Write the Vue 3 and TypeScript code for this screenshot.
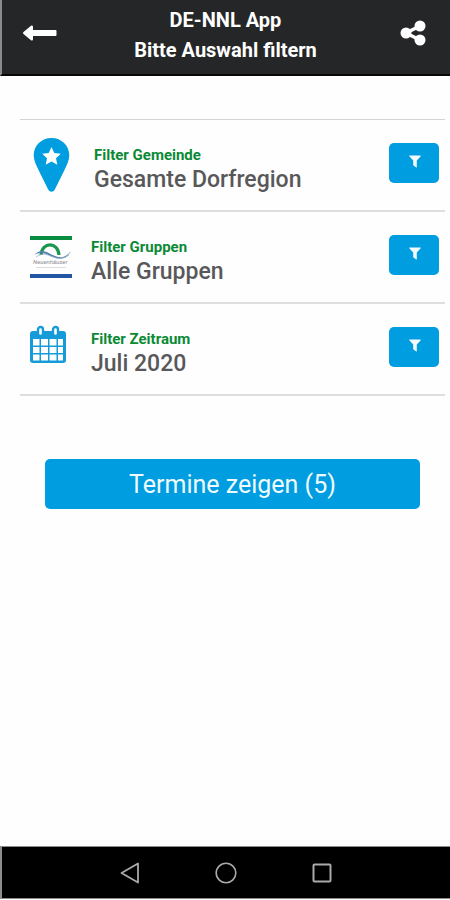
<script setup lang="ts">
type IconName = 'pin' | 'logo' | 'calendar'

interface FilterRow {
  icon: IconName
  label: string
  value: string
}

const filters: FilterRow[] = [
  { icon: 'pin', label: 'Filter Gemeinde', value: 'Gesamte Dorfregion' },
  { icon: 'logo', label: 'Filter Gruppen', value: 'Alle Gruppen' },
  { icon: 'calendar', label: 'Filter Zeitraum', value: 'Juli 2020' },
]

const eventCount = 5
</script>

<template>
  <div class="screen">
    <header class="top-bar">
      <button class="bar-button" type="button" aria-label="Zurück">
        <svg width="34" height="16" viewBox="0 0 34 16">
          <path d="M.5 7 8 .8Q10-.3 10 2V5H32.500Q33.500 5 33.500 6V10Q33.500 11 32.500 11H10V14Q10 16.300 8 15.200L.5 9Q-.5 8 .5 7Z" fill="#fff" />
        </svg>
      </button>
      <h1 class="title">DE-NNL App<br />Bitte Auswahl filtern</h1>
      <button class="bar-button" type="button" aria-label="Teilen">
        <svg width="26" height="26" viewBox="0 0 26 26">
          <path d="M20 6 6 13 20 20" fill="none" stroke="#fff" stroke-width="3.600" />
          <circle cx="20" cy="6" r="5.500" fill="#fff" />
          <circle cx="6" cy="13" r="5.500" fill="#fff" />
          <circle cx="20" cy="20" r="5.500" fill="#fff" />
        </svg>
      </button>
    </header>

    <main class="content">
      <ul class="filters">
        <li v-for="row in filters" :key="row.icon" class="filter-row">
          <span class="icon" :class="row.icon">
            <svg v-if="row.icon === 'pin'" width="37" height="56" viewBox="0 0 37 56">
              <path d="M18.500 1C8.500 1 .7 8.500.7 18.300c0 5.500 2.800 10.500 5.300 15.700L15.200 52.500c1.500 3 5.100 3 6.600 0L31 34c2.500-5.200 5.300-10.200 5.300-15.700C36.300 8.500 28.500 1 18.500 1Z" fill="#009de0" />
              <path d="m18.500 10 2.800 6 6.500.8-4.800 4.500 1.300 6.500-5.800-3.200-5.800 3.200 1.300-6.500-4.800-4.500 6.500-.8Z" fill="#fff" />
            </svg>
            <svg v-else-if="row.icon === 'logo'" width="42" height="44" viewBox="0 0 42 44">
              <rect y="1" width="42" height="4" fill="#078c40" />
              <rect y="39" width="42" height="4" fill="#2356a2" />
              <path d="M11 20C12 6.500 28 6.500 29 20" fill="none" stroke="#1a9650" stroke-width="3.200" />
              <path d="M4 20C12 12 17 18 25 21S37 21 41 16C37 24 31 25 23 22S12 16 4 20Z" fill="#557fad" />
              <path d="M6 22C13 17 18 20 23 22S34 24 39 20" fill="none" stroke="#9bb7ca" stroke-width="0.800" />
              <text x="3" y="29" font-size="6" font-style="italic" fill="#8c8c96">Neuenhäuser</text>
              <path d="M6 32.500H36" stroke="#deded9" stroke-width="1" />
            </svg>
            <svg v-else width="36" height="39" viewBox="0 0 36 39">
              <rect y="6" width="36" height="32" rx="3" fill="#159bd7" />
              <path d="M3 14h6.500v6.500H3zM11 14h7v6.500h-7zM19.500 14h7v6.500h-7zM28 14h5v6.500h-5zM3 22h6.500v6H3zM11 22h7v6h-7zM19.500 22h7v6h-7zM28 22h5v6h-5zM3 29.500h6.500v6H3zM11 29.500h7v6h-7zM19.500 29.500h7v6h-7zM28 29.500h5v6h-5z" fill="#fff" />
              <rect x="8" y="2" width="5" height="9" rx="2.500" fill="#fff" stroke="#159bd7" stroke-width="2.400" />
              <rect x="23" y="2" width="5" height="9" rx="2.500" fill="#fff" stroke="#159bd7" stroke-width="2.400" />
            </svg>
          </span>
          <div class="text">
            <div class="label">{{ row.label }}</div>
            <div class="value">{{ row.value }}</div>
          </div>
          <button class="filter-button" type="button" :aria-label="row.label">
            <svg width="12" height="13" viewBox="0 0 12 13">
              <path d="M.7.500H11.300Q12.300.500 11.500 1.600L7.800 5.600V12Q7.800 13 6.900 12.300L4.500 10.500Q4.200 10.200 4.200 9.800V5.600L.5 1.600Q-.3.500.7.500Z" fill="#f2fcff" />
            </svg>
          </button>
        </li>
      </ul>
      <button class="show-button" type="button">Termine zeigen ({{ eventCount }})</button>
    </main>

    <nav class="system-bar" aria-label="System">
      <button class="nav-button" type="button" aria-label="Zurück">
        <svg width="22" height="22" viewBox="0 0 22 22"><path d="M19 1.500V20.500L2.500 11Z" fill="none" stroke="#aaa" stroke-width="1.800" stroke-linejoin="round" /></svg>
      </button>
      <button class="nav-button" type="button" aria-label="Startseite">
        <svg width="22" height="22" viewBox="0 0 22 22"><circle cx="11" cy="11" r="9.800" fill="none" stroke="#aaa" stroke-width="1.600" /></svg>
      </button>
      <button class="nav-button" type="button" aria-label="Übersicht">
        <svg width="22" height="22" viewBox="0 0 22 22"><rect x="2.500" y="2.500" width="17" height="17" rx="1" fill="none" stroke="#aaa" stroke-width="2" /></svg>
      </button>
    </nav>
  </div>
</template>

<style>
body {
  margin: 0;
  background: #fefefe;
}
</style>

<style scoped>
.screen {
  display: flex;
  flex-direction: column;
  min-height: 100vh;
  box-sizing: border-box;
  padding-bottom: 1px;
  font-family: Roboto, "Liberation Sans", sans-serif;
  background: #fefefe;
}

button {
  padding: 0;
  border: 0;
  background: none;
  font: inherit;
  cursor: pointer;
}

svg {
  display: block;
}

.top-bar {
  display: flex;
  align-items: center;
  justify-content: space-between;
  box-sizing: border-box;
  height: 76px;
  padding: 0 24px 8px 21px;
  border-left: 2px solid #8c8c8c;
  border-bottom: 2px solid #080808;
  background: #252627;
}

.bar-button {
  display: flex;
  justify-content: flex-end;
  min-width: 32px;
}

.title {
  margin: 0;
  padding-top: 4px;
  color: #fff;
  font-size: 20px;
  font-weight: 700;
  line-height: 30px;
  text-align: center;
}

.content {
  display: flex;
  flex: 1;
  flex-direction: column;
  padding-top: 43px;
}

.filters {
  margin: 0 5px 0 20px;
  padding: 0;
  border-top: 1px solid #d4d4d4;
  list-style: none;
}

.filter-row {
  display: flex;
  height: 90px;
  border-bottom: 2px solid #dedede;
}

.icon {
  flex: none;
  box-sizing: border-box;
  width: 71px;
  padding: 23px 0 0 10px;
}

.icon.pin {
  width: 74px;
  padding: 17px 0 0 13px;
}

.icon.calendar {
  padding-top: 21px;
}

.text {
  flex: 1;
  padding-top: 24px;
}

.label {
  color: #0b8a35;
  font-size: 15px;
  font-weight: 700;
  line-height: 22px;
}

.value {
  color: #58585a;
  font-size: 23px;
  font-weight: 500;
  line-height: 28px;
}

.filter-button {
  display: flex;
  flex: none;
  justify-content: center;
  width: 50px;
  height: 40px;
  margin: 23px 6px 0 0;
  padding: 12px 0 0 2px;
  border-radius: 5px;
  background: #009de0;
}

.show-button {
  height: 50px;
  margin: 63px 30px 0 45px;
  border-radius: 5px;
  background: #009de0;
  color: #effbff;
  font-size: 25px;
}

.system-bar {
  display: flex;
  align-items: center;
  justify-content: center;
  gap: 74px;
  box-sizing: border-box;
  height: 53px;
  border: solid #8c8c8c;
  border-width: 1px 0 1px 2px;
  background: #000;
}
</style>
